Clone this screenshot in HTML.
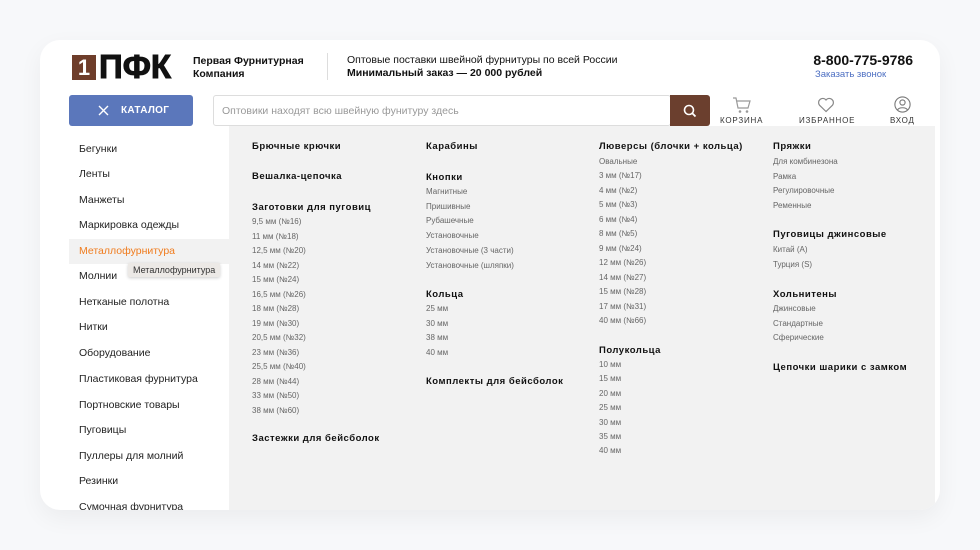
<!DOCTYPE html>
<html><head><meta charset="utf-8">
<style>
*{margin:0;padding:0;box-sizing:border-box}
body{width:980px;height:550px;background:#f7f8fa;font-family:"Liberation Sans","DejaVu Sans",sans-serif;position:relative;overflow:hidden;color:#222}
.card{position:absolute;left:40px;top:40px;width:900px;height:470px;background:#fff;border-radius:20px;overflow:hidden;box-shadow:0 8px 24px rgba(0,0,0,0.05)}
.a{position:absolute;white-space:nowrap}
.panel{position:absolute;left:189px;top:86px;width:706px;height:400px;background:#f2f2f2}
.h{font-size:9.5px;font-weight:bold;letter-spacing:0.5px;color:#111}
.i{font-size:8px;color:#666}
.s{font-size:10.5px;color:#222;left:39px}
.lbl{font-size:8px;letter-spacing:0.8px;color:#333}
</style></head><body>
<div class="card">
 <div class="a" style="left:32px;top:15px;width:24px;height:25px;background:#6e3d2a;color:#fff;font-weight:bold;font-size:22px;line-height:25px;text-align:center">1</div>
 <div class="a" style="left:59px;top:8px;font-size:33px;font-weight:bold;color:#111;line-height:38px;-webkit-text-stroke:1px #111">ПФК</div>
 <div class="a" style="left:153px;top:15px;font-size:10.5px;font-weight:bold;line-height:13px;color:#111">Первая Фурнитурная<br>Компания</div>
 <div class="a" style="left:287px;top:13px;width:1px;height:27px;background:#ddd"></div>
 <div class="a" style="left:307px;top:14px;font-size:10.5px;line-height:13px;color:#111">Оптовые поставки швейной фурнитуры по всей России<br><b>Минимальный заказ — 20 000 рублей</b></div>
 <div class="a" style="right:27px;top:12px;font-size:14px;font-weight:bold;color:#111">8-800-775-9786</div>
 <div class="a" style="left:775px;top:29px;font-size:9.5px;color:#4d6fc2">Заказать звонок</div>
 <div class="a" style="left:29px;top:55px;width:124px;height:31px;background:#5b77bb;border-radius:3px;color:#fff;font-size:10px;font-weight:bold;letter-spacing:0.3px">
  <svg class="a" style="left:29px;top:10px" width="11" height="11" viewBox="0 0 11 11"><path d="M1 1L10 10M10 1L1 10" stroke="#fff" stroke-width="1.4"/></svg>
  <span class="a" style="left:52px;top:0;line-height:31px">КАТАЛОГ</span></div>
 <div class="a" style="left:173px;top:55px;width:458px;height:31px;border:1px solid #ddd;border-radius:3px;background:#fff"></div>
 <div class="a" style="left:182px;top:65px;font-size:10.5px;color:#999">Оптовики находят всю швейную фунитуру здесь</div>
 <div class="a" style="left:630px;top:55px;width:40px;height:31px;background:#6b3f2e;border-radius:0 3px 3px 0">
  <svg class="a" style="left:13px;top:9px" width="14" height="14" viewBox="0 0 14 14"><circle cx="6" cy="6" r="4.5" stroke="#fff" stroke-width="1.6" fill="none"/><path d="M9.3 9.3L12.5 12.5" stroke="#fff" stroke-width="1.8"/></svg></div>
 <svg class="a" style="left:692px;top:57px" width="20" height="17" viewBox="0 0 20 17"><path d="M1 1h3l2 10h10l2-7H5" stroke="#999" stroke-width="1.2" fill="none"/><circle cx="8" cy="14.5" r="1.3" fill="#999"/><circle cx="15" cy="14.5" r="1.3" fill="#999"/></svg>
 <div class="a lbl" style="left:680px;top:76px">КОРЗИНА</div>
 <svg class="a" style="left:777px;top:57px" width="18" height="16" viewBox="0 0 18 16"><path d="M9 14.5L2.5 8.2A3.9 3.9 0 0 1 9 3a3.9 3.9 0 0 1 6.5 5.2Z" stroke="#888" stroke-width="1.2" fill="none"/></svg>
 <div class="a lbl" style="left:759px;top:76px">ИЗБРАННОЕ</div>
 <svg class="a" style="left:854px;top:56px" width="17" height="17" viewBox="0 0 17 17"><circle cx="8.5" cy="8.5" r="7.6" stroke="#777" stroke-width="1.1" fill="none"/><circle cx="8.5" cy="6.5" r="2.6" stroke="#777" stroke-width="1.1" fill="none"/><path d="M3.5 14c1.5-3 8.5-3 10 0" stroke="#777" stroke-width="1.1" fill="none"/></svg>
 <div class="a lbl" style="left:850px;top:76px">ВХОД</div>

 <div class="a" style="left:29px;top:199px;width:160px;height:25px;background:#f2f2f2"></div>
 <div class="panel"></div>
 <div class="a s" style="top:103px">Бегунки</div>
 <div class="a s" style="top:128px">Ленты</div>
 <div class="a s" style="top:154px">Манжеты</div>
 <div class="a s" style="top:179px">Маркировка одежды</div>
 <div class="a s" style="top:205px;color:#f07c1e">Металлофурнитура</div>
 <div class="a s" style="top:230px">Молнии</div>
 <div class="a s" style="top:256px">Нетканые полотна</div>
 <div class="a s" style="top:281px">Нитки</div>
 <div class="a s" style="top:307px">Оборудование</div>
 <div class="a s" style="top:333px">Пластиковая фурнитура</div>
 <div class="a s" style="top:359px">Портновские товары</div>
 <div class="a s" style="top:384px">Пуговицы</div>
 <div class="a s" style="top:410px">Пуллеры для молний</div>
 <div class="a s" style="top:435px">Резинки</div>
 <div class="a s" style="top:461px">Сумочная фурнитура</div>
 <div class="a" style="left:88px;top:223px;padding:2px 5px;background:#ece9e6;font-size:9px;color:#333;box-shadow:0 1px 3px rgba(0,0,0,0.2);border-radius:2px">Металлофурнитура</div>

 <div class="a h" style="left:212px;top:101px">Брючные крючки</div>
 <div class="a h" style="left:212px;top:131px">Вешалка-цепочка</div>
 <div class="a h" style="left:212px;top:162px">Заготовки для пуговиц</div>
 <div class="a i" style="left:212px;top:175px;line-height:14.5px">9,5 мм (№16)<br>11 мм (№18)<br>12,5 мм (№20)<br>14 мм (№22)<br>15 мм (№24)<br>16,5 мм (№26)<br>18 мм (№28)<br>19 мм (№30)<br>20,5 мм (№32)<br>23 мм (№36)<br>25,5 мм (№40)<br>28 мм (№44)<br>33 мм (№50)<br>38 мм (№60)</div>
 <div class="a h" style="left:212px;top:393px">Застежки для бейсболок</div>

 <div class="a h" style="left:386px;top:101px">Карабины</div>
 <div class="a h" style="left:386px;top:132px">Кнопки</div>
 <div class="a i" style="left:386px;top:145px;line-height:14.7px">Магнитные<br>Пришивные<br>Рубашечные<br>Установочные<br>Установочные (3 части)<br>Установочные (шляпки)</div>
 <div class="a h" style="left:386px;top:249px">Кольца</div>
 <div class="a i" style="left:386px;top:262px;line-height:14.6px">25 мм<br>30 мм<br>38 мм<br>40 мм</div>
 <div class="a h" style="left:386px;top:336px">Комплекты для бейсболок</div>

 <div class="a h" style="left:559px;top:101px">Люверсы (блочки + кольца)</div>
 <div class="a i" style="left:559px;top:115px;line-height:14.45px">Овальные<br>3 мм (№17)<br>4 мм (№2)<br>5 мм (№3)<br>6 мм (№4)<br>8 мм (№5)<br>9 мм (№24)<br>12 мм (№26)<br>14 мм (№27)<br>15 мм (№28)<br>17 мм (№31)<br>40 мм (№66)</div>
 <div class="a h" style="left:559px;top:305px">Полукольца</div>
 <div class="a i" style="left:559px;top:318px;line-height:14.4px">10 мм<br>15 мм<br>20 мм<br>25 мм<br>30 мм<br>35 мм<br>40 мм</div>

 <div class="a h" style="left:733px;top:101px">Пряжки</div>
 <div class="a i" style="left:733px;top:115px;line-height:14.6px">Для комбинезона<br>Рамка<br>Регулировочные<br>Ременные</div>
 <div class="a h" style="left:733px;top:189px">Пуговицы джинсовые</div>
 <div class="a i" style="left:733px;top:203px;line-height:14.6px">Китай (А)<br>Турция (S)</div>
 <div class="a h" style="left:733px;top:249px">Хольнитены</div>
 <div class="a i" style="left:733px;top:262px;line-height:14.6px">Джинсовые<br>Стандартные<br>Сферические</div>
 <div class="a h" style="left:733px;top:322px">Цепочки шарики с замком</div>
</div>
</body></html>
